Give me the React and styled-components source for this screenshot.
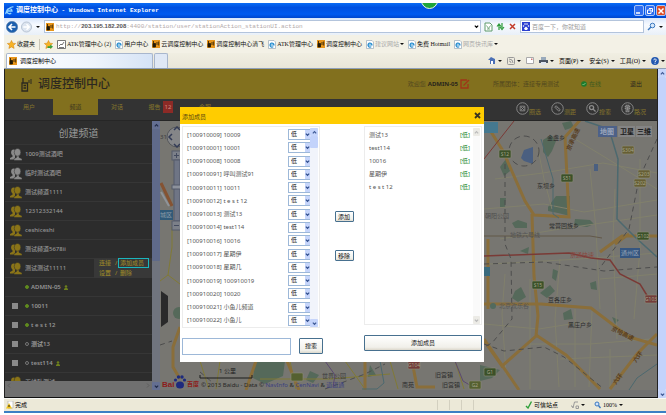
import React from 'react';
import styled, { createGlobalStyle, css } from 'styled-components';

const GlobalStyle = createGlobalStyle`
  * {
    box-sizing: border-box;
  }
  body {
    margin: 0;
    background: #fff;
    font-family: 'Noto Sans', 'Noto Sans CJK SC', sans-serif;
    font-size: 6px;
    line-height: 8px;
  }
  button, input, select {
    font: inherit;
    margin: 0;
    padding: 0;
    border: 0;
    border-radius: 0;
    background: none;
    color: inherit;
  }
  a {
    color: inherit;
    text-decoration: none;
  }
  ul {
    list-style: none;
    margin: 0;
    padding: 0;
  }
  h1, h2 {
    margin: 0;
    font-weight: normal;
  }
`;

const song = css`
  font-family: 'Liberation Serif', 'Noto Sans CJK SC', serif;
`;

/* ---------- browser window ---------- */

const Window = styled.div`
  display: flex;
  flex-direction: column;
  min-height: 100vh;
  padding: 3px 0 2px 4px;
`;

const TitleBar = styled.header`
  position: relative;
  display: flex;
  align-items: center;
  gap: 2px;
  height: 15px;
  padding: 0 0 0 1px;
  overflow: hidden;
  background: linear-gradient(#0a6cf5, #0050e0 30%, #005af0 75%, #0046cc);
  color: #fff;
`;

const WindowTitle = styled.span`
  flex: 1;
  font: bold 7px/9px 'Liberation Mono', 'Noto Sans CJK SC', monospace;
  white-space: pre;
`;

const Latin = styled.span`
  font-size: 6px;
`;

const GreenBall = styled.span`
  position: absolute;
  left: 63%;
  top: -11px;
  width: 17px;
  height: 17px;
  border: 1px solid #e8f5e8;
  border-radius: 50%;
  background: #1fa53a;
`;

const WindowButtons = styled.div`
  display: flex;
  gap: 1px;
`;

const WindowButton = styled.button`
  display: flex;
  align-items: center;
  justify-content: center;
  width: 10px;
  height: 11px;
  border: 1px solid #a9c4f7;
  border-radius: 2px;
  background: ${(props) => (props.$close ? '#dd4b25' : '#2f6df0')};
`;

const AddressRow = styled.div`
  display: flex;
  align-items: center;
  height: 17px;
  padding: 0 3px 0 2px;
  gap: 3px;
  background: linear-gradient(#d9e6fa, #f7faff 40%, #e9f0f8);
`;

const IconButton = styled.button`
  display: flex;
  align-items: center;
  justify-content: center;
  width: ${(props) => props.$w || 9}px;
  height: 12px;
`;

const Field = styled.label`
  display: flex;
  align-items: center;
  gap: 2px;
  height: 13px;
  min-width: 0;
  padding: 0 1px;
  border: 1px solid #b3c4dc;
  background: #fff;
  flex: ${(props) => props.$grow || '0 0 124px'};
`;

const UrlText = styled.span`
  flex: 1;
  overflow: hidden;
  color: #b3aaaa;
  font: 6px/9px 'Liberation Mono', monospace;
  white-space: nowrap;

  b {
    color: #555;
    font-family: 'Liberation Sans', sans-serif;
  }
`;

const SearchText = styled.input`
  ${song}
  flex: 1;
  min-width: 0;
  height: 9px;
  font-size: 6px;
  outline: none;

  &::placeholder {
    color: #999;
    opacity: 1;
  }
`;

const FavRow = styled.nav`
  ${song}
  display: flex;
  align-items: center;
  gap: 4px;
  height: 18px;
  padding: 0 3px;
  background: #f3f1e6;
  white-space: nowrap;
`;

const FavLink = styled.a`
  display: flex;
  align-items: center;
  gap: 1px;
  color: ${(props) => (props.$faded ? '#aaa' : '#111')};
`;

const Divider = styled.span`
  width: 1px;
  height: 11px;
  background: #c9c6b8;
`;

const TabRow = styled.div`
  ${song}
  display: flex;
  align-items: center;
  justify-content: space-between;
  height: 16px;
  padding: 0 1px 0 2px;
  border-bottom: 1px solid #8fa0b8;
  background: linear-gradient(#f0eee2, #e9e6d8);
`;

const Tabs = styled.div`
  display: flex;
  align-self: stretch;
  gap: 1px;
`;

const Tab = styled.a`
  display: flex;
  align-items: center;
  gap: 3px;
  width: ${(props) => (props.$blank ? 14 : 147)}px;
  padding: 0 2px;
  border: 1px solid #a8b6cc;
  border-bottom: 0;
  border-radius: 2px 2px 0 0;
  background: ${(props) => (props.$blank ? '#dfe8f5' : 'linear-gradient(90deg, #fff, #eef4fc 60%, #d5e3f6)')};
`;

const Tools = styled.div`
  display: flex;
  align-items: center;
  gap: 5px;
`;

const Tool = styled.button`
  display: flex;
  align-items: center;
  gap: 2px;
  white-space: nowrap;
`;

const StatusBar = styled.footer`
  ${song}
  display: flex;
  align-items: center;
  height: 15px;
  padding: 0 43px 0 2px;
  gap: 1px;
  border-top: 1px solid #f8f8f4;
  border-bottom: 2px solid #3b7fc4;
  background: #ece9d8;
`;

const StatusText = styled.span`
  display: flex;
  align-items: center;
  gap: 2px;
  margin-left: ${(props) => props.$left || 0}px;
`;

const Cells = styled.span`
  display: flex;
  gap: 11px;
  margin: 0 50px 0 auto;

  i {
    width: 1px;
    height: 10px;
    background: #d3d0c0;
  }
`;

/* ---------- page ---------- */

const Viewport = styled.div`
  display: flex;
  flex: 1;
  border-left: 1px solid #222;
`;

const Page = styled.div`
  position: relative;
  display: flex;
  flex: 1;
  flex-direction: column;
  min-width: 0;
  border-right: 1px solid #222;
  border-bottom: 1px solid #111;
  background: #707070;
`;

const Banner = styled.div`
  display: flex;
  align-items: center;
  height: 30px;
  padding: 0 15px;
  background: #82701e;
  color: #4a401c;
`;

const Brand = styled.h1`
  display: flex;
  flex: 1;
  align-items: center;
  gap: 5px;
  color: #2b2820;
  font-size: 12px;
  font-weight: 500;
  line-height: 16px;
`;

const UserLine = styled.div`
  display: flex;
  align-items: center;
  gap: 2px;
  margin-right: ${(props) => props.$right || 0}px;
  color: ${(props) => props.$color || '#51471f'};
  white-space: nowrap;

  b {
    color: #2a261c;
  }
`;

const MenuBar = styled.nav`
  display: flex;
  justify-content: space-between;
  height: 22px;
  padding-right: 11px;
  border-bottom: 1px solid #262626;
  background: #333;
  color: #85752c;
`;

const MenuGroup = styled.div`
  display: flex;
  gap: ${(props) => props.$gap || 0}px;
`;

const MenuItem = styled.a`
  display: flex;
  align-items: center;
  justify-content: center;
  gap: 2px;
  width: ${(props) => props.$w || 43}px;
  height: 16px;
  background: ${(props) => (props.$active ? '#82701e' : 'none')};
  color: ${(props) => (props.$active ? '#3c3520' : '#85752c')};
`;

const Badge = styled.span`
  padding: 2px;
  background: #8c2a26;
  color: #d08a80;
`;

const MapTool = styled.button`
  display: flex;
  align-items: center;
  height: 18px;
  width: 25px;
  color: #85752c;

  span {
    padding-top: 7px;
  }
`;

const Body = styled.div`
  display: flex;
  flex: 1;
  padding-bottom: 7px;
`;

const Sidebar = styled.aside`
  display: flex;
  flex-direction: column;
  width: 147px;
  height: 269px;
  background: #2c2c2c;
  color: #969696;
`;

const SidebarTitle = styled.h2`
  height: 24px;
  border-bottom: 1px solid #353535;
  background: #2e2e2e;
  color: #999;
  font-size: 10px;
  line-height: 24px;
  text-align: center;
`;

const Channels = styled.ul`
  flex: 1;
  overflow: hidden;
`;

const Channel = styled.li`
  display: flex;
  align-items: center;
  gap: 3px;
  height: 19px;
  padding-left: 5px;
  border-bottom: 1px solid #363636;
  font-weight: 500;
  white-space: nowrap;
`;

const Member = styled(Channel)`
  padding-left: ${(props) => (props.$noBox ? 20 : 7)}px;
  font-weight: 600;

  label {
    display: flex;
    align-items: center;
    gap: 2px;
  }
`;

const Check = styled.input`
  appearance: none;
  width: 6px;
  height: 6px;
  margin-right: 5px;
  background: #8a8a8a;
`;

const Dot = styled.span`
  width: 4px;
  height: 4px;
  border: 1px solid ${(props) => (props.$on ? '#5f8a1e' : '#777')};
  border-radius: 50%;
  background: ${(props) => (props.$on ? '#5f8a1e' : 'none')};
`;

const Actions = styled.div`
  display: grid;
  grid-template-columns: 16px 5px 28px;
  align-items: center;
  width: 58px;
  height: 19px;
  margin-left: auto;
  padding-left: 5px;
  background: #383838;
  color: #96832a;
`;

const Marked = styled.a`
  margin-left: -1px;
  padding-left: 1px;
  outline: 1px solid #1bb5bd;
`;

const VScroll = styled.div`
  display: flex;
  flex-direction: column;
  justify-content: space-between;
  width: ${(props) => props.$w || 8}px;
  background: ${(props) => props.$track || '#f1f4fb'};
`;

const HScroll = styled.div`
  display: flex;
  align-items: center;
  justify-content: space-between;
  height: 9px;
  padding: 0 2px;
  background: #707070;
  color: #5c5c5c;
`;

const Arrow = styled.button`
  display: flex;
  align-items: center;
  justify-content: center;
  width: 100%;
  height: 8px;
  border-radius: 1px;
  background: ${(props) => props.$bg || '#c6d5fb'};
  color: ${(props) => props.$color || '#3f5a96'};
`;

const Thumb = styled.span`
  flex: ${(props) => props.$flex || '0 0 12px'};
  margin-bottom: auto;
  border-radius: 1px;
  background: ${(props) => props.$bg || '#c3d3fb'};
`;

const MapSvg = styled.svg`
  flex: 1;
  min-width: 0;
  width: 0;
  height: 269px;
  background: #777671;
  font-family: 'Noto Sans', 'Noto Sans CJK SC', sans-serif;
`;

/* ---------- dialog ---------- */

const Overlay = styled.div`
  position: absolute;
  inset: 0;
  display: flex;
  align-items: flex-start;
  justify-content: center;
  padding: 38px 0 0 2px;
`;

const Dialog = styled.section`
  width: 304px;
  background: #fff;
  color: #555;
`;

const DialogHead = styled.div`
  display: flex;
  align-items: center;
  justify-content: space-between;
  height: 17px;
  padding: 2px 3px 0 2px;
  background: #fc0;
  color: #5c4a10;
`;

const DialogBody = styled.div`
  display: grid;
  grid-template-columns: 138px 1fr 118px;
  padding: 2px 2px 7px;
`;

const ListBox = styled.div`
  display: flex;
  height: ${(props) => props.$h}px;
  padding: 1px 1px 0 0;
  border: 1px solid #ececec;
`;

const Rows = styled.ul`
  display: grid;
  flex: 1;
  grid-template-rows: repeat(15, 1fr);
  padding-left: 4px;
`;

const Row = styled.li`
  display: flex;
  align-items: center;
  justify-content: space-between;
  min-height: 0;
  padding-right: ${(props) => props.$right || 0}px;
  white-space: nowrap;
`;

const Level = styled.span`
  color: #1d8a2e;
`;

const Picker = styled.span`
  display: flex;
  width: 22px;
  height: 11px;
  border: 1px solid #9db8d8;
  border-right: 0;
  background: #fff;
  color: #222;

  svg {
    align-self: stretch;
    height: 9px;
    background: #c6d5fb;
    color: #33508f;
  }
`;

const LevelSelect = styled.select`
  appearance: none;
  flex: 1;
  min-width: 0;
  height: 9px;
  padding-left: 2px;
  line-height: 9px;
  outline: none;
`;

const Middle = styled.div`
  display: flex;
  flex-direction: column;
  align-items: center;
  gap: 28px;
  padding: 85px 0 0 4px;
`;

const PushButton = styled.button`
  width: ${(props) => props.$w || '100%'};
  height: ${(props) => props.$h || 16}px;
  border: 1px solid #47708f;
  border-radius: 1px;
  background: linear-gradient(#fff, #f1f0ea 80%, #dcd8cc);
  color: #111;
`;

const SearchLine = styled.div`
  grid-column: span 2;
  display: flex;
  align-items: flex-start;
  gap: 8px;
  padding-top: 10px;
`;

const SearchInput = styled.input`
  width: 109px;
  height: 17px;
  padding: 0 3px;
  border: 1px solid #9db8d8;
  background: #fff;
`;

const Submit = styled.div`
  padding-top: 7px;
`;

/* ---------- icons ---------- */

const Chevron = ({ up, size = 5 }) => (
  <svg width={size} height={size} viewBox="0 0 6 6" fill="none" stroke="currentColor" strokeWidth="1.5">
    <path d={up ? 'M1 4l2-2 2 2' : 'M1 2l2 2 2-2'} />
  </svg>
);

const Caret = () => (
  <svg width="4" height="4" viewBox="0 0 4 4"><path d="M0 1h4L2 3z" fill="#111" /></svg>
);

const IeIcon = () => (
  <svg width="8" height="9" viewBox="0 0 8 9">
    <path d="M0.5 0.5h5.5l1.5 1.5v6.5h-7z" fill="#fff" stroke="#9aa9b8" strokeWidth=".7" />
    <path d="M2 5h4a2 2 0 1 0-.7 1.6" fill="none" stroke="#2a8fd0" strokeWidth="1.2" />
  </svg>
);

const RadioIcon = () => (
  <svg width="8" height="8" viewBox="0 0 8 8">
    <rect width="8" height="8" fill="#e8951a" />
    <path d="M1 3.500h2.500v3.500H1zM1.500 1v2.500" fill="#221a08" stroke="#221a08" strokeWidth=".8" />
    <path d="M5 2v3M6.700 1.500v4" stroke="#221a08" strokeWidth=".8" />
  </svg>
);

const Star = ({ plus }) => (
  <svg width="9" height="9" viewBox="0 0 10 10">
    <path d="M5 .5l1.400 3 3.200.4-2.400 2.200.7 3.300L5 7.700 2.100 9.400l.7-3.300L.4 3.900l3.200-.4z" fill="#f8b324" stroke="#d58512" strokeWidth=".6" />
    {plus && <path d="M4 7h3V5l3 2.500-3 2.300V9H4z" fill="#35a03c" />}
  </svg>
);

const People = ({ color }) => (
  <svg width="12" height="13" viewBox="0 0 12 13" fill={color}>
    <ellipse cx="3.600" cy="4.600" rx="2.500" ry="3" />
    <path d="M0 11.500V10l2.500-1.200V7h2.500v4.500z" />
    <path d="M4 12.500v-1.800l2.500-1.300V7.500h2.500v1.900l3 1.300v1.800z" stroke="#2c2c2c" strokeWidth=".5" />
    <ellipse cx="7.500" cy="4.300" rx="3.300" ry="3.900" stroke="#2c2c2c" strokeWidth=".5" />
  </svg>
);

const toolDrawings = {
  select: <path d="M4.500 4.500h5v5h-5zM5.500 5.500l3 3m0-3l-3 3" />,
  ruler: <path d="M4 5.500l1.500-1.500 4.500 4.500-1.500 1.500zM6 6.500l1-1M7.500 8l1-1" />,
  search: <path d="M8.200 6a2.200 2.200 0 1 1-4.400 0 2.200 2.200 0 0 1 4.400 0zM7.800 7.800l2.500 2.500" strokeWidth="1.400" />,
  traffic: <path d="M5.500 3.500h3v7h-3zM4 5h1.500M4 7h1.500M8.500 5H10M8.500 7H10M7 4.500v5" strokeWidth="1.200" />,
};

const CircleIcon = ({ kind }) => (
  <svg width="13" height="13" viewBox="0 0 14 14" fill="none" stroke="#8c8c8c">
    <circle cx="7" cy="7" r="6.200" />
    {toolDrawings[kind]}
  </svg>
);

/* ---------- map ---------- */

const Shield = ({ x, y, color, text }) => (
  <g>
    <rect x={x} y={y} width="12" height="8" rx="1" fill={color} stroke="#8f8f78" strokeWidth=".6" />
    <text x={x + 6} y={y + 6} fontSize="5" fill="#a4a48a" textAnchor="middle">{text}</text>
  </g>
);

const places = [
  [547, 141, '金盏乡'],
  [537, 189, '东坝乡'],
  [549, 229, '常营回族乡'],
  [548, 303, '豆各庄乡'],
  [568, 328, '黑庄户乡'],
  [435, 378, '旧宫镇'],
  [442, 388, '旧宫镇'],
  [402, 388, '南苑'],
];

const CityMap = () => (
  <MapSvg viewBox="160 122 497 269" preserveAspectRatio="xMinYMin slice">
    <g fill="#55695a">
      <path d="M543 141l8-5 5 6-4 10-4 6-5-5zM548 208l8-11h14v20l-12-3-10-2zM512 224l6-3 9 3v5h-12zM575 220l15 1 4 4-7 3-13-2zM500 168l6-8 4 12-6 5zM500 199h6l-1 9h-5zM515 292l6-4 5 10-8 5-6-4zM540 294l10-8 5 6-8 7zM553 270l5 2-2 10-4-3zM590 284l6-2 1 9-6-1zM563 314l8-4 2 10-9 1zM612 318l7 3-4 4zM520 252l9-4-1 7zM562 124l9-2 3 6-9 3zM480 366l20 5-8 8-12 3zM255 362h30l-2 15-18 8-12-6zM310 372l9 4-6 8-7-3zM370 366l6 10-8 2z" />
      <circle cx="179" cy="314" r="6" />
    </g>
    <g fill="none" stroke="#81806c" strokeWidth="1">
      <path d="M484 210l60-5 40 8 73-12M500 240l60-10 97-14M490 265l90-5 77-6M538 150l6 30 8 30M575 140l82 50M590 170l6 60 4 80M615 190l-2 50 4 100M640 160v90l-6 70M505 275l-3 40 4 60M530 280v110M560 260l-5 60 4 68M575 310v78M592 312l-3 76M610 350v40M560 360l97-4M530 345h60l60-5M484 325l55 5 50-8M600 280l57-5M495 180l48-6 60-10 54 10" />
      <path d="M172 228v20l-4 28-8 6M168 276l12 9M200 362l9 28M220 362l-4 28M290 362l6 28M345 362l20 28M390 362l8 28M455 362l9 28M260 380h70l60-5" stroke="#817a35" />
    </g>
    <g fill="none" stroke="#8a6e3a" strokeWidth="3">
      <path d="M488 128l15 24 22 50 9 14 35 2-4-80 16-18" />
      <path d="M532 215l2 62 4 40-2 20-34 30-22-31" />
      <path d="M484 305l57 0 50 4 38 29 28 8" />
      <path d="M536 336l30 20 34 34" />
      <path d="M657 335l-20 20-27 35M600 253l22-16h35M615 245l14-10" />
      <path d="M484 340l35 51M488 240v70M256 362l-10 29M287 362l12 29M365 362v29M412 362l5 26h18" />
      <path d="M180 328l-7 20v20l7 12" />
    </g>
    <g fill="none" stroke="#7a3a36" strokeWidth="1.500">
      <path d="M484 257l85-3 22 5 19 2 10 14 20 10 8 13 9 3" />
      <path d="M484 160l30-38" strokeWidth="1" />
    </g>
    <g fill="none" stroke="#4c696f" strokeWidth="2">
      <path d="M585 122l24 8 9 30-1 60 18 18 22 20" strokeWidth="1.500" />
      <path d="M657 365l-20 14-8 12" strokeWidth="1" />
      <path d="M541 140l12 40v35l6 4M380 362l4 22-7 6h-15" strokeWidth="1" />
    </g>
    <path d="M524 151l9-3v17l-9-3-3-3zM594 165h4v7h-4z" fill="#4a5f80" />
    <g fill="none" stroke="#4d4d4d" strokeWidth="1">
      <circle cx="524" cy="152" r="15" strokeDasharray="6 4" />
      <path d="M505 165v80l6 15 1 60-20 24-8 4M484 265l60-2 60 9 53-4M484 345l20 7 40-4 20 10 40 32M657 140l-18 40-10 50-30 40M325 390l40-15 20-10M200 373l12 10M160 346l12-4" strokeDasharray="5 4" />
      <path d="M484 237h106l12 2" stroke="#625849" />
      <path d="M325 362l10 14-2 12M455 362l8 20 10 6 8-3" stroke="#5b4970" />
    </g>
    <g fontWeight="700" fontSize="6" fill="#573d20">
      <text transform="translate(570 152) rotate(-65)">京承高速</text>
      <text transform="translate(611 331) rotate(26)">京哈高速</text>
      <text transform="translate(616 386) rotate(-54)">六环</text>
      <text transform="translate(636 364) rotate(-54)">六环</text>
    </g>
    <text x="570" y="258" fontSize="6" fill="#8a4940">京通快速</text>
    <text x="510" y="238" fontSize="6" fill="#535353">地铁六号线</text>
    <text x="485" y="219" fontSize="6" fill="#4e4e4e">朝阳公园</text>
    <circle cx="493" cy="307" r="3" fill="#526a5e" />
    <text x="499" y="309" fontSize="6" fill="#565656">北京欢乐谷</text>
    {places.map(([x, y, name], i) => (
      <text key={i} x={x} y={y} fontSize="6" fill="#2c2c2c">{name}</text>
    ))}
    <text x="322" y="379" fontSize="6" fill="#3c3c3c">世界公园</text>
    <Shield x={499} y={151} color="#3b5128" text="S12" />
    <Shield x={561} y={175} color="#3b5128" text="S51" />
    <Shield x={532} y={282} color="#3b5128" text="S15" />
    <Shield x={484} y={369} color="#3b5128" text="G1" />
    <Shield x={637} y={233} color="#3b5128" text="G102" />
    <Shield x={622} y={147} color="#665e34" text="S304" />
    <Shield x={638} y={171} color="#665e34" text="S203" />
    <Shield x={634} y={180} color="#665e34" text="S202" />
    <Shield x={645} y={296} color="#733c3a" text="G103" />
    <Shield x={408} y={362} color="#733c3a" text="G104" />
    <Shield x={291} y={374} color="#556030" text="" />
    <Shield x={469} y={382} color="#556030" text="G2" />
    <rect x="620" y="249" width="20" height="10" fill="#365680" />
    <text x="621" y="256" fontSize="6" fill="#94a4b8">通州区</text>
    <rect x="484" y="268" width="6" height="9" fill="#3a6b7e" />
    <rect x="484" y="123" width="14" height="11" fill="#45788f" />
    <rect x="160" y="211" width="13" height="10" fill="#315a79" />
    <text x="160" y="218" fontSize="6" fill="#8b9ba8">城区</text>
    <path d="M161 292l7 5v26l-7 5z" fill="#2a2a2a" />
    <path d="M161 184l11 23" stroke="#855332" strokeWidth="3" />
    <path d="M161 193l8 14" stroke="#8f9499" strokeWidth="2" />
    <text x="160" y="140" fontSize="6" fill="#3c3c3c">31</text>

    <g>
      <circle cx="177" cy="138" r="10" fill="#858688" stroke="#56585c" />
      <path d="M172 135l-3 3 3 3M174 131l3-3 3 3M174 145l3 3 3-3" fill="none" stroke="#333b55" strokeWidth="1.500" />
      <rect x="172" y="152" width="9" height="9" fill="#7c8089" stroke="#555b6b" />
      <rect x="174" y="161" width="6" height="61" fill="#6f7585" stroke="#555b6b" />
      <rect x="172" y="186" width="9" height="4" fill="#8d929c" stroke="#555b6b" />
      <rect x="172" y="222" width="9" height="9" fill="#7c8089" stroke="#555b6b" />
      <path d="M174 156.500h5M176.500 154v5M174 226.500h5" stroke="#444b5f" />
    </g>

    <g fontSize="7" fontWeight="700">
      <rect x="598" y="127" width="19" height="11" fill="#4d6188" />
      <rect x="618" y="127" width="17" height="11" fill="#848484" />
      <rect x="636" y="127" width="16" height="11" fill="#848484" />
      <text x="600" y="135" fill="#9aa6bc">地图</text>
      <text x="620" y="135" fill="#1c1c1c">卫星</text>
      <text x="637" y="135" fill="#1c1c1c">三维</text>
    </g>

    <path d="M200 376v3h52v-3" fill="none" stroke="#1d1d1d" />
    <text x="219" y="374" fontSize="6" fill="#1d1d1d">1 公里</text>
    <g fontFamily="Liberation Sans" fontWeight="700">
      <text x="162" y="388" fontSize="8" fill="#8c1d1b">Bai</text>
      <text x="187" y="387" fontSize="6" fill="#8c1d1b" fontFamily="Noto Sans CJK SC">百度</text>
    </g>
    <g fill="#1d2a7d">
      <ellipse cx="180" cy="386" rx="4" ry="3.500" />
      <circle cx="175.500" cy="381" r="1.600" />
      <circle cx="178.500" cy="378" r="1.700" />
      <circle cx="182" cy="378" r="1.700" />
      <circle cx="184.500" cy="381" r="1.600" />
    </g>
    <text x="201" y="388" fontSize="6" fill="#262626">
      © 2013 Baidu - Data © <tspan fill="#3c4180">NavInfo</tspan> &amp; <tspan fill="#3c4180">CenNavi</tspan> &amp; <tspan fill="#3c4180">道道通</tspan>
    </text>
  </MapSvg>
);

/* ---------- data ---------- */

const channels = [
  ['1009测试酒吧', false],
  ['临时测试酒吧', false],
  ['测试频道1111', true],
  ['12312332144', true],
  ['ceshiceshi', true],
  ['测试频道5678ii', true],
];

const members = [
  { name: 'ADMIN-05', on: true, tag: true, noBox: true },
  { name: '10011', on: true },
  { name: 't e s t 12', on: true },
  { name: '测试13' },
  { name: 'test114', tag: true },
];

const candidates = [
  '[100910009] 10009',
  '[100910001] 10001',
  '[100910008] 10008',
  '[100910091] 呼叫测试91',
  '[100910011] 10011',
  '[100910012] t e s t 12',
  '[100910013] 测试13',
  '[100910014] test114',
  '[100910016] 10016',
  '[100910017] 星期伊',
  '[100910018] 星期几',
  '[100910019] 100910019',
  '[100910020] 10020',
  '[100910021] 小鱼儿频道',
  '[100910022] 小鱼儿',
];

const chosen = ['测试13', 'test114', '10016', '星期伊', 't e s t 12'];

const GOLD = '#8a7418';

function BrowserTop() {
  return (
    <>
      <TitleBar>
        <svg width="9" height="9" viewBox="0 0 9 9">
          <path d="M2 5h5a2.600 2.600 0 1 0-.8 2M1 8C0 6 5 0 8.500 1" fill="none" stroke="#8fd4ff" strokeWidth="1.300" />
        </svg>
        <WindowTitle>调度控制中心<Latin> - Windows Internet Explorer</Latin></WindowTitle>
        <GreenBall />
        <WindowButtons>
          <WindowButton aria-label="最小化">
            <svg width="8" height="8" viewBox="0 0 8 8"><path d="M1 6h4" stroke="#fff" strokeWidth="1.500" /></svg>
          </WindowButton>
          <WindowButton aria-label="还原">
            <svg width="8" height="8" viewBox="0 0 8 8"><path d="M3 1.500h3.500V5M1.500 3h3.500v3.500H1.500z" fill="none" stroke="#fff" /></svg>
          </WindowButton>
          <WindowButton $close aria-label="关闭">
            <svg width="8" height="8" viewBox="0 0 8 8"><path d="M1.500 1.500l5 5m0-5l-5 5" stroke="#fff" strokeWidth="1.500" /></svg>
          </WindowButton>
        </WindowButtons>
      </TitleBar>

      <AddressRow>
        <IconButton $w={12} aria-label="后退">
          <svg width="12" height="12" viewBox="0 0 12 12">
            <circle cx="6" cy="6" r="5.700" fill="#1c5fae" stroke="#5d7fa8" strokeWidth=".6" />
            <path d="M9.500 6H3M6 3L3 6l3 3" fill="none" stroke="#fff" strokeWidth="1.600" />
          </svg>
        </IconButton>
        <IconButton $w={11} aria-label="前进">
          <svg width="11" height="12" viewBox="0 0 12 12">
            <circle cx="6" cy="6" r="5.500" fill="#dde5f0" stroke="#9fadc0" strokeWidth=".7" />
            <path d="M2.500 6H9M6 3l3 3-3 3" fill="none" stroke="#fff" strokeWidth="1.600" />
          </svg>
        </IconButton>
        <IconButton $w={6} aria-label="历史"><Caret /></IconButton>
        <Field as="div" $grow="1">
          <RadioIcon />
          <UrlText>http://<b>203.195.182.208</b>:4400/station/user/stationAction_stationUI.action</UrlText>
          <Chevron />
        </Field>
        <IconButton aria-label="兼容性视图">
          <svg width="9" height="10" viewBox="0 0 9 10"><path d="M1 1h5l2 2v6H1z" fill="#fff" stroke="#5c9a6a" /><path d="M2.500 3.500l2 3 2-3M3 7h3" fill="none" stroke="#5c9a6a" strokeWidth=".8" /></svg>
        </IconButton>
        <IconButton aria-label="刷新">
          <svg width="9" height="9" viewBox="0 0 9 9"><path d="M3 8V3M1 4.500L3 2l2 2.500M6 1v5M4 5l2 2.500L8 5" fill="none" stroke="#2c9a3c" strokeWidth="1.200" /></svg>
        </IconButton>
        <IconButton aria-label="停止">
          <svg width="7" height="7" viewBox="0 0 7 7"><path d="M1 1l5 5m0-5L1 6" stroke="#c23a2a" strokeWidth="1.500" /></svg>
        </IconButton>
        <Field>
          <svg width="8" height="9" viewBox="0 0 8 9">
            <rect width="8" height="9" fill="#2a3fd0" />
            <path d="M4 4.500l2 2-1 1.500H3L2 6.500z" fill="#fff" />
            <circle cx="1.500" cy="4" r=".8" fill="#fff" /><circle cx="3" cy="2" r=".8" fill="#fff" />
            <circle cx="5" cy="2" r=".8" fill="#fff" /><circle cx="6.500" cy="4" r=".8" fill="#fff" />
          </svg>
          <SearchText placeholder="百度一下，你就知道" aria-label="搜索" />
        </Field>
        <IconButton aria-label="搜索">
          <svg width="9" height="9" viewBox="0 0 9 9"><circle cx="5.500" cy="3.500" r="2.300" fill="#d7e8fb" stroke="#3a78c0" /><path d="M4 5L1 8" stroke="#3a78c0" strokeWidth="1.500" /></svg>
        </IconButton>
        <Caret />
      </AddressRow>

      <FavRow>
        <FavLink href="#"><Star />收藏夹</FavLink>
        <Divider />
        <Star plus />
        <FavLink href="#">
          <svg width="9" height="9" viewBox="0 0 9 9"><path d="M.5.5h8v8h-8zM2 6l2-2 1 1 2-3M2 7.500h5" fill="#fff" stroke="#555" strokeWidth=".8" /></svg>
          ATK管理中心 (2)
        </FavLink>
        <FavLink href="#"><IeIcon />用户中心</FavLink>
        <FavLink href="#"><RadioIcon />云调度控制中心</FavLink>
        <FavLink href="#"><RadioIcon />调度控制中心清飞</FavLink>
        <FavLink href="#"><IeIcon />ATK管理中心</FavLink>
        <FavLink href="#"><RadioIcon />调度控制中心</FavLink>
        <FavLink href="#" $faded><IeIcon />建议网站 <Caret /></FavLink>
        <FavLink href="#"><IeIcon />免费 Hotmail</FavLink>
        <FavLink href="#" $faded><IeIcon />网页快讯库 <Caret /></FavLink>
      </FavRow>

      <TabRow>
        <Tabs>
          <Tab href="#"><RadioIcon />调度控制中心</Tab>
          <Tab href="#" $blank aria-label="新选项卡" />
        </Tabs>
        <Tools>
          <Tool aria-label="主页">
            <svg width="8" height="9" viewBox="0 0 8 9"><path d="M0 4l3-3 4 2v5H2V4z" fill="#4a6fb5" /><path d="M3 5h2v3H3z" fill="#fff" /></svg>
            <Caret />
          </Tool>
          <Tool aria-label="源">
            <svg width="8" height="8" viewBox="0 0 8 8" fill="none" stroke="#999"><rect x=".5" y=".5" width="7" height="7" rx="1" /><path d="M2 4a2 2 0 0 1 2 2M2 2a4 4 0 0 1 4 4" /></svg>
            <Caret />
          </Tool>
          <Tool aria-label="邮件">
            <svg width="8" height="7" viewBox="0 0 8 7"><path d="M.5.5h7v6h-7z" fill="#fff" stroke="#aaa" /><path d="M5 1.500h1.500V3H5z" fill="#c77" /></svg>
          </Tool>
          <Tool aria-label="打印">
            <svg width="9" height="8" viewBox="0 0 9 8"><path d="M2 0h5v3H2z" fill="#9ab" /><path d="M0 3h9v3H0z" fill="#4b5563" /><path d="M2 5h5v3H2z" fill="#dfe5ee" /></svg>
            <Caret />
          </Tool>
          <Tool>页面(P)<Caret /></Tool>
          <Tool>安全(S)<Caret /></Tool>
          <Tool>工具(O)<Caret /></Tool>
          <Tool aria-label="帮助">
            <svg width="8" height="8" viewBox="0 0 8 8"><circle cx="4" cy="4" r="3.900" fill="#2258b0" /><path d="M2.800 3.200c0-1.800 2.500-1.600 2.400 0C5.200 4 4 4 4 5M4 5.700v1" fill="none" stroke="#fff" /></svg>
            <Caret />
          </Tool>
        </Tools>
      </TabRow>
    </>
  );
}

function ChannelList() {
  return (
    <Sidebar>
      <SidebarTitle>创建频道</SidebarTitle>
      <Channels>
        {channels.map(([name, active]) => (
          <Channel key={name}><People color={active ? GOLD : '#8a8a8a'} />{name}</Channel>
        ))}
        <Channel>
          <People color={GOLD} />测试测试11111
          <Actions>
            <a href="#">连接</a><span>/</span><Marked href="#">添加成员</Marked>
            <a href="#">设置</a><span>/</span><a href="#">删除</a>
          </Actions>
        </Channel>
        {members.map((m) => (
          <Member key={m.name} $noBox={m.noBox}>
            <label>
              {!m.noBox && <Check type="checkbox" />}
              <Dot $on={m.on} />
              {m.name}
            </label>
            {m.tag && (
              <svg width="4" height="5" viewBox="0 0 4 5" fill="#6d7f1c">
                <circle cx="2" cy="1.500" r="1.300" />
                <path d="M0 5V4l1-1h2l1 1v1z" />
              </svg>
            )}
          </Member>
        ))}
        <Channel><People color={GOLD} />无线队测试</Channel>
      </Channels>
      <HScroll>
        <svg width="4" height="5" viewBox="0 0 4 5" fill="none" stroke="currentColor"><path d="M3 .5l-2 2 2 2" /></svg>
        <svg width="4" height="5" viewBox="0 0 4 5" fill="none" stroke="currentColor"><path d="M1 .5l2 2-2 2" /></svg>
      </HScroll>
    </Sidebar>
  );
}

function AddMembers() {
  return (
    <Overlay>
      <Dialog role="dialog" aria-label="添加成员">
        <DialogHead>
          <span>添加成员</span>
          <button aria-label="关闭">
            <svg width="7" height="7" viewBox="0 0 7 7"><path d="M1 1l5 5m0-5L1 6" stroke="#3a3420" strokeWidth="1.800" /></svg>
          </button>
        </DialogHead>
        <DialogBody>
          <ListBox $h={202}>
            <Rows>
              {candidates.map((name) => (
                <Row key={name}>
                  {name}
                  <Picker>
                    <LevelSelect aria-label={name}><option>低</option></LevelSelect>
                    <Chevron />
                  </Picker>
                </Row>
              ))}
            </Rows>
            <VScroll $w={8}>
              <Arrow><Chevron up /></Arrow>
              <Thumb />
              <Arrow><Chevron /></Arrow>
            </VScroll>
          </ListBox>
          <Middle>
            <PushButton $w="19px" $h={11}>添加</PushButton>
            <PushButton $w="19px" $h={11}>移除</PushButton>
          </Middle>
          <ListBox $h={199}>
            <Rows>
              {chosen.map((name) => (
                <Row key={name} $right={3}>{name}<Level>[低]</Level></Row>
              ))}
            </Rows>
            <VScroll $w={7} $track="#fafafa">
              <Arrow $bg="#ecebe6" $color="#bbb"><Chevron up /></Arrow>
              <Arrow $bg="#ecebe6" $color="#bbb"><Chevron /></Arrow>
            </VScroll>
          </ListBox>
          <SearchLine>
            <SearchInput aria-label="搜索成员" />
            <PushButton $w="24px">搜索</PushButton>
          </SearchLine>
          <Submit><PushButton>添加成员</PushButton></Submit>
        </DialogBody>
      </Dialog>
    </Overlay>
  );
}

export default function App() {
  return (
    <Window>
      <GlobalStyle />
      <BrowserTop />
      <Viewport>
        <Page>
          <Banner>
            <Brand>
              <svg width="13" height="15" viewBox="0 0 13 15" fill="none" stroke="#2b2820">
                <path d="M2 6h5.500v8H2zM3 6V1M3.500 8.500h2.500M3.500 11h2.500" strokeWidth="1.300" />
                <path d="M9 3v3M11 2v5" />
              </svg>
              调度控制中心
            </Brand>
            <UserLine $right={23}>
              欢迎您 <b>ADMIN-05</b>
              <svg width="10" height="10" viewBox="0 0 10 10" fill="none" stroke="#a03418"><path d="M7 1H1v8h7V5M3.500 6.500L9 1" strokeWidth="1.300" /></svg>
            </UserLine>
            <UserLine $right={22}>所属团体：连接专用测试</UserLine>
            <UserLine $right={29} $color="#3f5a20">
              <svg width="6" height="6" viewBox="0 0 6 6"><circle cx="3" cy="3" r="2.800" fill="#1d7a2c" /><path d="M1.500 3l1 1 2-2" fill="none" stroke="#7fc080" /></svg>
              在线
            </UserLine>
            <UserLine $color="#2b2820">退出</UserLine>
          </Banner>
          <MenuBar>
            <MenuGroup>
              <MenuItem href="#" $w={48}>用户</MenuItem>
              <MenuItem href="#" $w={45} $active>频道</MenuItem>
              <MenuItem href="#" $w={38}>对话</MenuItem>
              <MenuItem href="#" $w={50}>报告<Badge>12</Badge></MenuItem>
              <MenuItem href="#" $w={38}>会服</MenuItem>
            </MenuGroup>
            <MenuGroup $gap={10}>
              <MapTool><CircleIcon kind="select" /><span>圈选</span></MapTool>
              <MapTool><CircleIcon kind="ruler" /><span>测距</span></MapTool>
              <MapTool><CircleIcon kind="search" /><span>搜索</span></MapTool>
              <MapTool><CircleIcon kind="traffic" /><span>路况</span></MapTool>
            </MenuGroup>
          </MenuBar>
          <Body>
            <ChannelList />
            <VScroll $track="#70747e">
              <Arrow $bg="#646f92" $color="#222c4a"><Chevron up /></Arrow>
              <Thumb $flex="0 0 132px" $bg="#5f6a8a" />
              <Arrow $bg="#646f92" $color="#222c4a"><Chevron /></Arrow>
            </VScroll>
            <CityMap />
          </Body>
          <AddMembers />
        </Page>
        <VScroll $w={8}>
          <Arrow><Chevron up /></Arrow>
          <Thumb $flex="1" />
          <Arrow><Chevron /></Arrow>
        </VScroll>
      </Viewport>
      <StatusBar>
        <svg width="8" height="8" viewBox="0 0 8 8"><path d="M2 0h5v7H2z" fill="#fff" stroke="#aaa" strokeWidth=".6" /><path d="M3 2l3 5.500H0z" fill="#f2c318" /><path d="M3 4v2" stroke="#222" /></svg>
        <StatusText>完成</StatusText>
        <Cells><i /><i /><i /><i /></Cells>
        <StatusText>
          <svg width="7" height="8" viewBox="0 0 7 8"><path d="M1 5l2 2 3.500-6.500" fill="none" stroke="#2fa03a" strokeWidth="1.400" /></svg>
          可信站点
        </StatusText>
        <StatusText $left={12}>
          <svg width="8" height="8" viewBox="0 0 8 8" fill="none" stroke="#999"><path d="M0 5h1l1 2 1.500-6H7M5 5h2.500v2.500H5z" /></svg>
          <Caret />
        </StatusText>
        <StatusText $left={8}>
          <svg width="7" height="8" viewBox="0 0 7 8"><circle cx="3" cy="3" r="2" fill="#cfe2fa" stroke="#3a78c0" /><path d="M4.500 4.500L6.500 7" stroke="#3a78c0" strokeWidth="1.400" /></svg>
          100% <Caret />
        </StatusText>
      </StatusBar>
    </Window>
  );
}
